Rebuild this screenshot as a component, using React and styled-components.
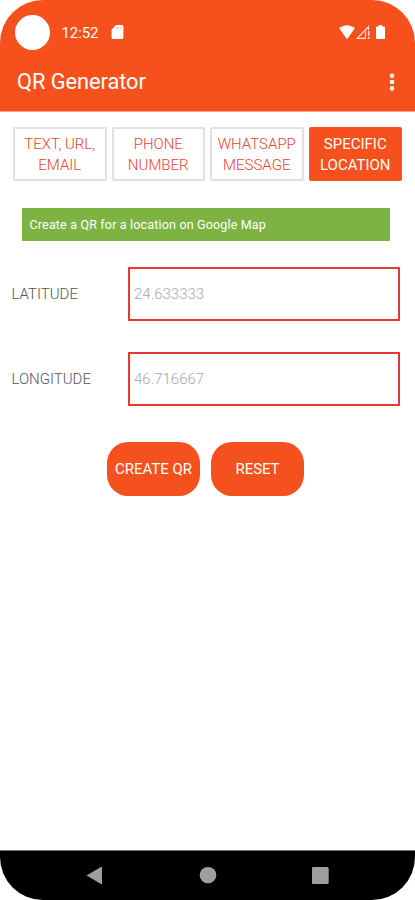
import React from "react";
import styled, { createGlobalStyle } from "styled-components";

const GlobalStyle = createGlobalStyle`
  * { box-sizing: border-box; }
  body { margin: 0; background: #fff; font-family: Roboto, sans-serif; }
  button, input { font-family: inherit; margin: 0; }
`;

const Screen = styled.div`
  width: 415px;
  height: 900px;
  display: flex;
  flex-direction: column;
  overflow: hidden;
  border-radius: 43px;
  background: #fff;
`;

const Header = styled.header`
  height: 112px;
  background: #f6511d;
  border-bottom: 1px solid #f8a48a;
  color: #fff;
`;

const StatusBar = styled.div`
  height: 56px;
  padding: 15px 28px 0 15px;
  display: flex;
  align-items: flex-start;
`;

const Camera = styled.div`
  width: 35px;
  height: 35px;
  border-radius: 50%;
  background: #fff;
`;

const Clock = styled.span`
  margin: 8px 0 0 11.5px;
  width: 49.5px;
  font-size: 15px;
  line-height: 20px;
  letter-spacing: -0.1px;
`;

const StatusIcon = styled.svg`
  display: block;
  margin-top: 10px;
`;

const StatusIcons = styled.div`
  display: flex;
  margin-left: auto;
`;

const TitleBar = styled.div`
  height: 55px;
  padding: 0 20px 3px 17px;
  display: flex;
  align-items: center;
  justify-content: space-between;
`;

const Title = styled.h1`
  margin: 0;
  font-size: 21.8px;
  line-height: 28px;
  font-weight: 400;
  letter-spacing: -0.05px;
`;

const MenuButton = styled.button`
  padding: 0;
  border: 0;
  background: none;
  display: flex;
`;

const Content = styled.main`
  flex: 1;
`;

const Tabs = styled.nav`
  margin: 15px 13px 0 13px;
  display: grid;
  grid-template-columns: repeat(4, 1fr);
  gap: 5px;
`;

const Tab = styled.button`
  height: 54px;
  padding: 1px 0 0;
  border: 2px solid ${(p) => (p.$active ? "#f6511d" : "#e2e0df")};
  border-radius: 2px;
  background: ${(p) => (p.$active ? "#f6511d" : "#fff")};
  color: ${(p) => (p.$active ? "#fff" : "#e8432f")};
  font-size: 15px;
  font-weight: ${(p) => (p.$active ? 400 : 300)};
  line-height: 21px;
  white-space: pre-line;
`;

const Banner = styled.p`
  margin: 27px 25.5px 0 22px;
  height: 33px;
  padding-left: 7.5px;
  background: #7cb342;
  color: #fff;
  font-size: 12.5px;
  line-height: 33px;
  letter-spacing: 0.17px;
`;

const Form = styled.form`
  padding: 26px 15px 0 11.5px;
`;

const Field = styled.label`
  height: 54px;
  margin-bottom: 31px;
  display: grid;
  grid-template-columns: 116px 1fr;
  align-items: center;
  color: #555;
  font-size: 15px;
  font-weight: 300;
`;

const Input = styled.input`
  width: 100%;
  height: 54px;
  padding: 0 4.5px;
  border: 2px solid #e53935;
  border-radius: 0;
  background: #fff;
  font-size: 15px;
  font-weight: 300;
  &::placeholder { color: #a8a8a8; opacity: 1; }
`;

const Actions = styled.div`
  padding: 5px 0 0 95.5px;
  display: flex;
  gap: 11px;
`;

const ActionButton = styled.button`
  width: 93px;
  height: 54px;
  padding: 0 0 1px;
  border: 0;
  border-radius: 21px;
  background: #f4511e;
  color: #fff;
  font-size: 15px;
  letter-spacing: ${(p) => p.$spacing || "-0.1px"};
`;

const NavBar = styled.footer`
  height: 50px;
  border-top: 1px solid #737373;
  background: #000;
  display: flex;
  padding: 15px 0 0 86px;
  gap: 93px;
`;

const NavIcon = styled.svg`
  width: 20px;
  height: 20px;
  fill: #9e9e9e;
`;

const tabs = [
  { text: "TEXT, URL,\nEMAIL" },
  { text: "PHONE\nNUMBER" },
  { text: "WHATSAPP\nMESSAGE" },
  { text: "SPECIFIC\nLOCATION", active: true },
];

export default function App() {
  return (
    <>
      <GlobalStyle />
      <Screen>
        <Header>
          <StatusBar>
            <Camera />
            <Clock>12:52</Clock>
            <StatusIcon width="13" height="15" viewBox="0 0 13 15">
              <path fill="#fff" d="M5 0H11Q12.4 0 12.4 1.5V12.7Q12.4 14 11 14H2Q.6 14 .6 12.7V4.7Z" />
              <path stroke="#f6511d" strokeWidth="1" d="M5.5 2.2v2.3M7.8 2.2v2.3M10 2.2v2.3" opacity=".35" />
            </StatusIcon>
            <StatusIcons>
              <StatusIcon width="49" height="15" viewBox="0 0 49 15">
                <path fill="#fff" d="M1 3.1Q9 -2.6 17 3.1L9 14.2Z" />
                <path fill="none" stroke="#ffe0d6" strokeWidth="1.2" d="M30.5 5V1.8L19.2 13.3H27.5V6.5" />
                <path stroke="#ffe0d6" strokeWidth="1.5" d="M30.7 6v4.7M30.7 12v2" />
                <path fill="#fff" d="M39 1.5h1.8V0h3.4v1.5H46q1 0 1 1V13q0 1-1 1H39q-1 0-1-1V2.5q0-1 1-1Z" />
              </StatusIcon>
            </StatusIcons>
          </StatusBar>
          <TitleBar>
            <Title>QR Generator</Title>
            <MenuButton aria-label="More options">
              <svg width="6" height="18" viewBox="0 0 6 18" fill="#fff">
                <circle cx="3" cy="2.8" r="2.3" />
                <circle cx="3" cy="9" r="2.3" />
                <circle cx="3" cy="15.4" r="2.3" />
              </svg>
            </MenuButton>
          </TitleBar>
        </Header>
        <Content>
          <Tabs>
            {tabs.map((t) => (
              <Tab key={t.text} $active={t.active}>{t.text}</Tab>
            ))}
          </Tabs>
          <Banner>Create a QR for a location on Google Map</Banner>
          <Form>
            <Field>LATITUDE<Input placeholder="24.633333" /></Field>
            <Field>LONGITUDE<Input placeholder="46.716667" /></Field>
            <Actions>
              <ActionButton type="button" $spacing="0">CREATE QR</ActionButton>
              <ActionButton type="reset">RESET</ActionButton>
            </Actions>
          </Form>
        </Content>
        <NavBar>
          <NavIcon viewBox="0 0 20 20"><path d="M.5 9.5L15 1Q16 .5 16 1.5V17.5Q16 18.5 15 18Z" /></NavIcon>
          <NavIcon viewBox="0 0 20 20"><circle cx="9" cy="9.2" r="8.3" /></NavIcon>
          <NavIcon viewBox="0 0 20 20"><rect x="-.3" y="1" width="17" height="17" rx="1.5" /></NavIcon>
        </NavBar>
      </Screen>
    </>
  );
}
